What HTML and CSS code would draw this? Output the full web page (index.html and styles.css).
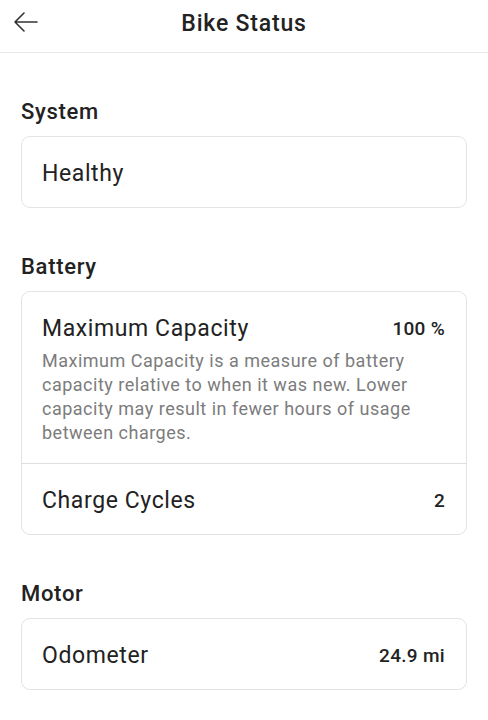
FILE: index.html
```html
<!DOCTYPE html>
<html lang="en">
<head>
<meta charset="utf-8">
<title>Bike Status</title>
<link rel="stylesheet" href="styles.css">
</head>
<body>
<header class="topbar">
  <button class="back" aria-label="Back">
    <svg width="26" height="22" viewBox="0 0 26 22" fill="none" stroke="#333" stroke-width="1.6" stroke-linecap="round" stroke-linejoin="round">
      <path d="M24 11H2M11 2L2 11l9 9"/>
    </svg>
  </button>
  <h1 class="title">Bike Status</h1>
</header>
<main class="content">
  <section class="group">
    <h2 class="group-title">System</h2>
    <div class="card">
      <div class="row"><span class="label">Healthy</span></div>
    </div>
  </section>
  <section class="group">
    <h2 class="group-title">Battery</h2>
    <div class="card">
      <div class="row row-tall">
        <div class="row-head"><span class="label">Maximum Capacity</span><span class="value">100 %</span></div>
        <p class="desc">Maximum Capacity is a measure of battery capacity relative to when it was new. Lower capacity may result in fewer hours of usage between charges.</p>
      </div>
      <div class="row row-split"><span class="label">Charge Cycles</span><span class="value">2</span></div>
    </div>
  </section>
  <section class="group">
    <h2 class="group-title">Motor</h2>
    <div class="card">
      <div class="row"><span class="label">Odometer</span><span class="value">24.9 mi</span></div>
    </div>
  </section>
</main>
</body>
</html>
```
FILE: styles.css
```css
* { box-sizing: border-box; }
html, body { margin: 0; padding: 0; background: #fff; }
body {
  font-family: Roboto, "Liberation Sans", sans-serif;
  color: #222;
  width: 488px;
}
.topbar {
  height: 53px;
  border-bottom: 1px solid #e8e8e8;
  display: flex;
  align-items: flex-start;
  justify-content: center;
  position: relative;
}
.back {
  position: absolute;
  left: 13px;
  top: 11px;
  border: 0;
  background: none;
  padding: 0;
  display: flex;
}
.title {
  margin: 0;
  padding-top: 2px;
  line-height: 44px;
  font-size: 23px;
  font-weight: 500;
  letter-spacing: 0.8px;
  color: #222;
}
.content {
  padding: 43px 21px 0;
  display: flex;
  flex-direction: column;
  gap: 43px;
}
.group { display: flex; flex-direction: column; gap: 9px; }
.group-title {
  margin: 0;
  padding-top: 1px;
  font-size: 22px;
  line-height: 30px;
  font-weight: 500;
  letter-spacing: 0.7px;
  color: #222;
}
.card {
  border: 1px solid #e3e3e3;
  border-radius: 9px;
  background: #fff;
}
.row {
  display: flex;
  justify-content: space-between;
  align-items: center;
  padding: 22px 21px 18px 20px;
  min-height: 70px;
}
.row-tall { display: block; padding-bottom: 18px; }
.row-head { display: flex; justify-content: space-between; align-items: center; }
.row-split { border-top: 1px solid #e0e0e0; }
.label {
  font-size: 23px;
  line-height: 30px;
  letter-spacing: 0.6px;
  color: #222;
}
.value {
  font-size: 19px;
  line-height: 30px;
  font-weight: 500;
  letter-spacing: 0.3px;
  color: #222;
}
.desc {
  margin: 5px 0 0;
  font-size: 18px;
  line-height: 24px;
  letter-spacing: 0.5px;
  color: #7c7c7c;
}
```
